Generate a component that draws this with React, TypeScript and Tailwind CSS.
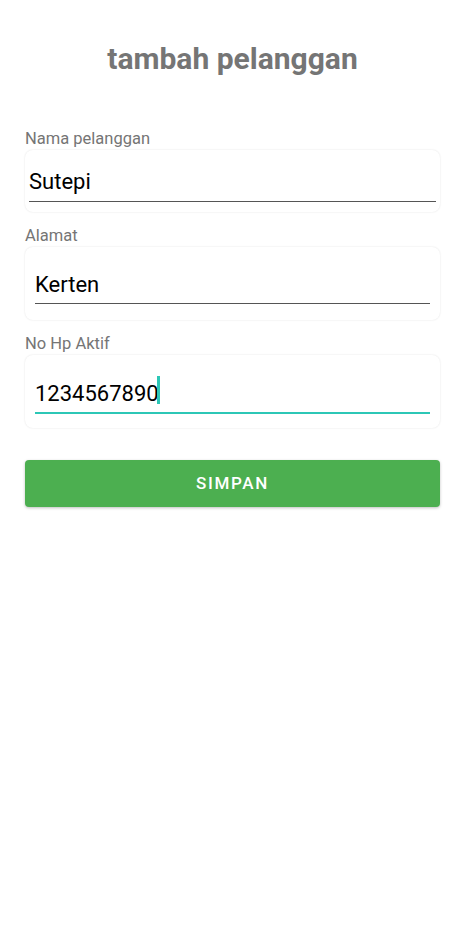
import { useState } from "react";

function Field({
  label,
  value,
  onChange,
  box,
  line,
  focused,
}: {
  label: string;
  value: string;
  onChange: (v: string) => void;
  box: string;
  line: string;
  focused?: boolean;
}) {
  return (
    <div className="flex flex-col">
      <label className="text-[16.5px] leading-[19px] text-[#757575] mb-[2px]">{label}</label>
      <div className={`bg-white rounded-[8px] shadow-[0_0_2px_rgba(0,0,0,0.12)] flex flex-col ${box}`}>
        <div
          className={`flex items-center ${line} ${
            focused ? "border-b-[2.5px] border-[#2cc7b6]" : "border-b border-[#555555]"
          }`}
        >
          <input
            value={value}
            onChange={(e) => onChange(e.target.value)}
            className="w-full bg-transparent outline-none text-[22px] leading-[26px] text-black pb-[6px]"
            style={{ caretColor: "#2cc7b6" }}
          />
        </div>
      </div>
    </div>
  );
}

export default function App() {
  const [nama, setNama] = useState("Sutepi");
  const [alamat, setAlamat] = useState("Kerten");
  const [hp, setHp] = useState("1234567890");

  return (
    <div
      className="min-h-[936px] w-full bg-white px-[25px] flex flex-col"
      style={{ fontFamily: "Roboto, 'Noto Sans', sans-serif" }}
    >
      <h1 className="text-center font-bold text-[30px] leading-[34px] text-[#757575] mt-[42px] mb-[53px]">
        tambah pelanggan
      </h1>

      <div className="flex flex-col gap-[14px]">
        <Field
          label="Nama pelanggan"
          value={nama}
          onChange={setNama}
          box="h-[62px] pt-[19px] px-[4px]"
          line="h-[33px]"
        />
        <Field
          label="Alamat"
          value={alamat}
          onChange={setAlamat}
          box="h-[73px] pt-[25px] px-[10px]"
          line="h-[32px]"
        />
        <div className="relative">
          <Field
            label="No Hp Aktif"
            value={hp}
            onChange={setHp}
            box="h-[73px] pt-[26px] px-[10px]"
            line="h-[33px]"
            focused
          />
          <span className="absolute left-[132px] top-[42px] w-[3px] h-[28px] bg-[#2cc7b6]" />
        </div>
      </div>

      <button className="mt-[32px] h-[47px] w-full rounded-[4px] bg-[#4caf50] text-white text-[17px] font-medium tracking-[0.1em] shadow-[0_1px_3px_rgba(0,0,0,0.25)]">
        SIMPAN
      </button>
    </div>
  );
}
